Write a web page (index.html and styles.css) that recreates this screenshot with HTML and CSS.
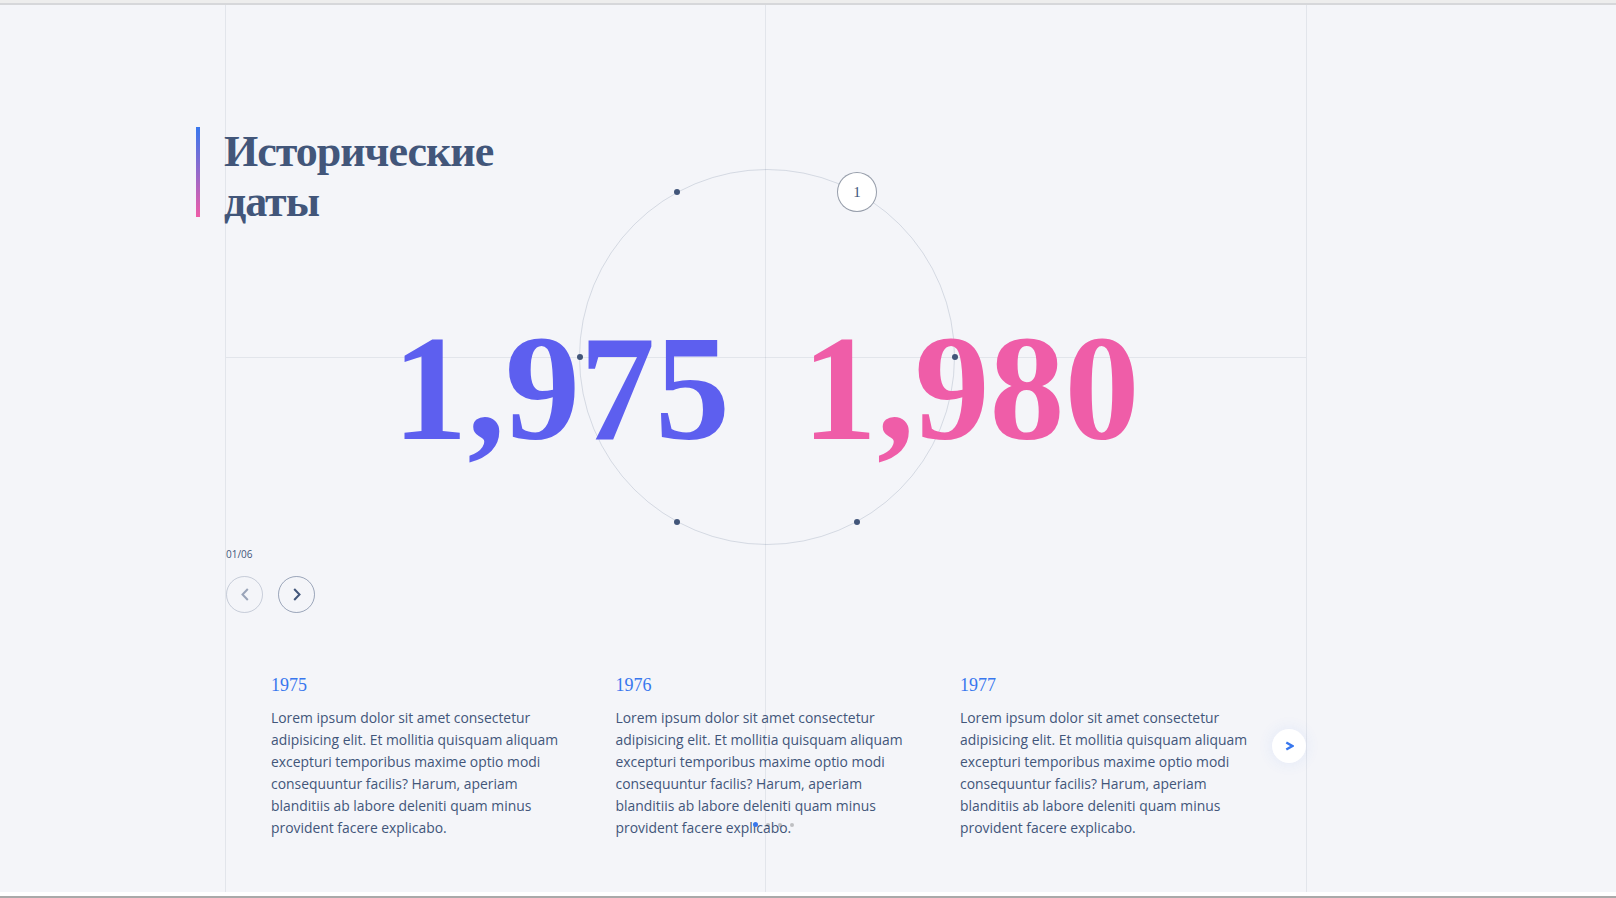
FILE: index.html
```html
<!DOCTYPE html>
<html lang="ru">
<head>
<meta charset="utf-8">
<title>Исторические даты</title>
<link rel="stylesheet" href="styles.css">
</head>
<body>
<div class="chrome-top"></div>
<main class="page">
  <section class="frame">
    <div class="title-row">
      <span class="title-bar"></span>
      <h1 class="title">Исторические<br>даты</h1>
    </div>

    <div class="years">
      <span class="year year-from">1,975</span>
      <span class="year year-to">1,980</span>
    </div>

    <div class="counter">01/06</div>
    <div class="nav">
      <button class="nav-btn is-disabled" aria-label="Назад">
        <svg width="8" height="13" viewBox="0 0 8 13"><path d="M6.8 1 L1.5 6.5 L6.8 12" fill="none" stroke="#42567A" stroke-width="2"/></svg>
      </button>
      <button class="nav-btn" aria-label="Вперёд">
        <svg width="8" height="13" viewBox="0 0 8 13"><path d="M1.2 1 L6.5 6.5 L1.2 12" fill="none" stroke="#42567A" stroke-width="2"/></svg>
      </button>
    </div>

    <div class="slider">
      <article class="card">
        <h3 class="card-year">1975</h3>
        <p class="card-text">Lorem ipsum dolor sit amet consectetur adipisicing elit. Et mollitia quisquam aliquam excepturi temporibus maxime optio modi consequuntur facilis? Harum, aperiam blanditiis ab labore deleniti quam minus provident facere explicabo.</p>
      </article>
      <article class="card">
        <h3 class="card-year">1976</h3>
        <p class="card-text">Lorem ipsum dolor sit amet consectetur adipisicing elit. Et mollitia quisquam aliquam excepturi temporibus maxime optio modi consequuntur facilis? Harum, aperiam blanditiis ab labore deleniti quam minus provident facere explicabo.</p>
      </article>
      <article class="card">
        <h3 class="card-year">1977</h3>
        <p class="card-text">Lorem ipsum dolor sit amet consectetur adipisicing elit. Et mollitia quisquam aliquam excepturi temporibus maxime optio modi consequuntur facilis? Harum, aperiam blanditiis ab labore deleniti quam minus provident facere explicabo.</p>
      </article>
      <button class="next-btn" aria-label="Следующий">
        <svg width="9" height="10" viewBox="0 0 9 10"><path d="M1.3 1.5 L7.3 5 L1.3 8.5" fill="none" stroke="#3877EE" stroke-width="2.4"/></svg>
      </button>
    </div>

    <div class="pagination">
      <span class="bullet is-active"></span>
      <span class="bullet"></span>
      <span class="bullet"></span>
      <span class="bullet"></span>
    </div>

    <div class="wheel">
      <span class="wheel-dot dot-1"></span>
      <span class="wheel-dot dot-2"></span>
      <span class="wheel-dot dot-3"></span>
      <span class="wheel-dot dot-4"></span>
      <span class="wheel-dot dot-5"></span>
      <span class="wheel-active">1</span>
    </div>
  </section>
</main>
<div class="chrome-bottom"></div>
</body>
</html>
```

FILE: styles.css
```css
* { box-sizing: border-box; }
html, body { margin: 0; padding: 0; }
body {
  width: 1616px;
  height: 898px;
  overflow: hidden;
  background: #fff;
  font-family: "Open Sans", sans-serif;
}
.chrome-top { height: 5px; background: #ededed; border-bottom: 2px solid #d6d7da; }
.page { height: 887px; background: #F4F5F9; }
.chrome-bottom { height: 6px; background: #fff; border-bottom: 2px solid #a9a9a9; }

.frame {
  position: relative;
  margin-left: 225px;
  width: 1082px;
  height: 100%;
  border-left: 1px solid rgba(66, 86, 122, 0.1);
  border-right: 1px solid rgba(66, 86, 122, 0.1);
  padding-top: 122px;
}
.frame::before {
  content: "";
  position: absolute;
  top: 0; bottom: 0; left: 539px;
  width: 1px;
  background: rgba(66, 86, 122, 0.1);
}
.frame::after {
  content: "";
  position: absolute;
  left: 0; right: 0; top: 352px;
  height: 1px;
  background: rgba(66, 86, 122, 0.1);
}

.title-row { display: flex; gap: 24px; margin-left: -30px; }
.title-bar {
  flex: none;
  width: 4px;
  height: 90px;
  background: linear-gradient(#3877EE, #EF5DA8);
}
.title {
  margin: 0;
  font: 700 44px/50px "Liberation Serif", serif;
  letter-spacing: -1px;
  color: #42567A;
}

.years {
  position: relative;
  z-index: 1;
  display: flex;
  justify-content: center;
  gap: 72px;
  margin-top: 86px;
  font: 700 150px/150px "Liberation Serif", serif;
}
.year-from { color: #5D5FEF; }
.year-to { color: #EF5DA8; }

.counter {
  margin-top: 85px;
  font: 400 10px/12px "Open Sans", sans-serif;
  color: #42567A;
}
.nav { display: flex; gap: 15px; margin-top: 16px; }
.nav-btn {
  width: 37px; height: 37px;
  padding: 0;
  border-radius: 50%;
  border: 1px solid rgba(66, 86, 122, 0.5);
  background: transparent;
  display: flex; align-items: center; justify-content: center;
}
.nav-btn.is-disabled { opacity: 0.5; }

.slider { display: flex; margin-top: 62px; padding-left: 45px; }
.card { flex: none; width: 300px; }
.card + .card { margin-left: 44.5px; }
.card-year {
  margin: 0 0 10.5px;
  font: 400 18px/21.6px "Liberation Serif", serif;
  color: #3877EE;
}
.card-text {
  margin: 0;
  font: 400 13.9px/22px "Open Sans", sans-serif;
  color: #42567A;
}
.next-btn {
  flex: none;
  margin: 54px 0 0 auto;
  width: 34px; height: 34px;
  padding: 0;
  border: none;
  border-radius: 50%;
  background: #fff;
  box-shadow: 0 0 15px rgba(56, 119, 238, 0.1);
  display: flex; align-items: center; justify-content: center;
}

.pagination {
  position: absolute;
  left: 527px; top: 817px;
  display: flex; align-items: center; gap: 8px;
}
.bullet { width: 4px; height: 4px; border-radius: 50%; background: rgba(0, 0, 0, 0.22); }
.bullet.is-active { width: 5px; height: 5px; background: #3877EE; }

.wheel {
  position: absolute;
  left: 353px; top: 164px;
  width: 376px; height: 376px;
  border: 1px solid rgba(66, 86, 122, 0.18);
  border-radius: 50%;
}
.wheel-dot {
  position: absolute;
  width: 6px; height: 6px;
  margin: -3px 0 0 -3px;
  border-radius: 50%;
  background: #42567A;
}
.dot-1 { left: 97px; top: 22px; }
.dot-2 { left: 0; top: 187px; }
.dot-3 { left: 97px; top: 352px; }
.dot-4 { left: 277px; top: 352px; }
.dot-5 { left: 375px; top: 187px; }
.wheel-active {
  position: absolute;
  left: 277px; top: 22px;
  width: 40px; height: 40px;
  margin: -20px 0 0 -20px;
  border-radius: 50%;
  background: #fff;
  border: 1px solid rgba(48, 62, 88, 0.5);
  display: flex; align-items: center; justify-content: center;
  font: 400 15px/1 "Liberation Serif", serif;
  color: #42567A;
}
```
